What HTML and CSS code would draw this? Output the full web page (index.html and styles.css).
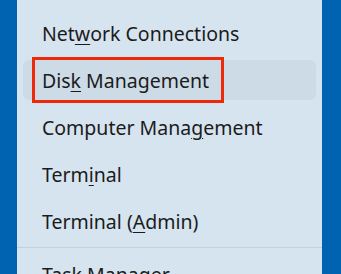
FILE: index.html
```html
<!DOCTYPE html>
<html lang="en">
<head>
    <meta charset="UTF-8">
    <meta name="viewport" content="width=device-width, initial-scale=1.0">
    <title>Quick Link Menu</title>
    <link rel="stylesheet" href="styles.css">
</head>
<body>
    <div class="menu">
        <ul class="group">
            <li class="item"><span>Net<u>w</u>ork Connections</span></li>
            <li class="item hover"><span>Dis<u>k</u> Management</span><span class="mark"></span></li>
            <li class="item"><span>Computer Mana<u>g</u>ement</span></li>
            <li class="item"><span>Term<u>i</u>nal</span></li>
            <li class="item"><span>Terminal (<u>A</u>dmin)</span></li>
        </ul>
        <div class="sep"></div>
        <ul class="group">
            <li class="item"><span>Task Manager</span></li>
        </ul>
    </div>
</body>
</html>
```

FILE: styles.css
```css
* {
    margin: 0;
    padding: 0;
    box-sizing: border-box;
}
body {
    background: #0063b1;
    height: 274px;
    overflow: hidden;
    font-family: "Noto Sans", "Open Sans", sans-serif;
}
.menu {
    margin-left: 17px;
    width: 305px;
    height: 320px;
    background: #d6e4f0;
    padding-top: 13px;
}
.group {
    list-style: none;
    display: flex;
    flex-direction: column;
    gap: 7px;
    padding: 0 6px;
}
.item {
    position: relative;
    height: 40px;
    display: flex;
    align-items: center;
    padding-left: 19px;
    font-size: 19.5px;
    color: #1b1b1b;
    border-radius: 6px;
}
.item u {
    text-decoration-thickness: 1px;
    text-underline-offset: 3px;
}
.hover {
    background: #cddbe7;
}
.mark {
    position: absolute;
    left: 9px;
    top: -3px;
    width: 192px;
    height: 46px;
    border: 3px solid #f0280a;
}
.sep {
    height: 1px;
    background: #c3d1dd;
    margin: 6px 0 6px;
}
```
